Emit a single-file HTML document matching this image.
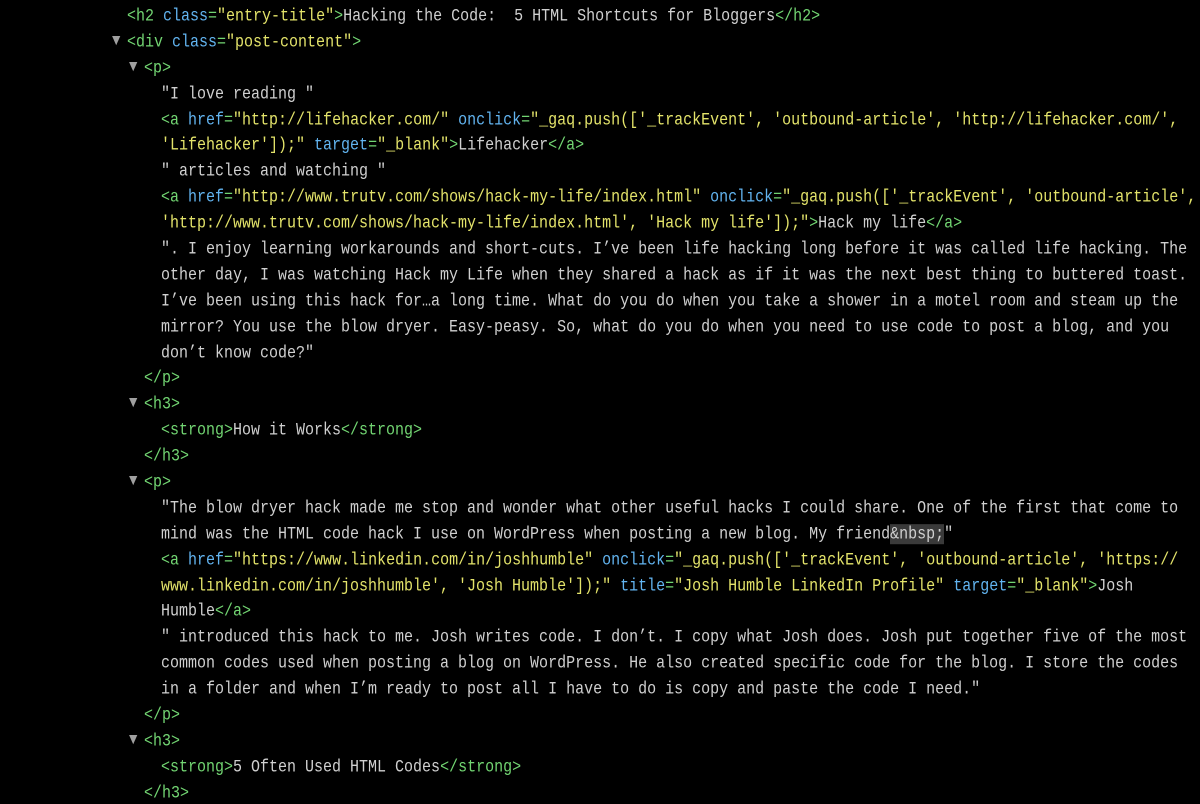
<!DOCTYPE html>
<html><head><meta charset="utf-8"><style>
html,body{margin:0;padding:0;background:#000;width:1200px;height:800px;overflow:hidden}
.c{position:absolute;left:0;top:4px;width:1200px;height:800px;overflow:hidden;font-family:"Liberation Mono",monospace;font-size:15px;color:#d0d0d0}
.l{height:25.9px;line-height:25.9px;position:relative;white-space:pre;transform:scaleY(1.18);transform-origin:50% 55%}
.t{color:#72d572}.n{color:#62b4f0}.v{color:#e3e36a}
.a{position:absolute;color:#a0a0a0;font-size:14px}
.hl{background:#3a3a3a}
</style></head><body><div class="c"><div class="l" style="padding-left:127px"><span class="t">&lt;h2 </span><span class="n">class</span><span class="t">=</span><span class="v">"entry-title"</span><span class="t">&gt;</span>Hacking the Code:  5 HTML Shortcuts for Bloggers<span class="t">&lt;/h2&gt;</span></div><div class="l" style="padding-left:127px"><span class="a" style="left:112px">▼</span><span class="t">&lt;div </span><span class="n">class</span><span class="t">=</span><span class="v">"post-content"</span><span class="t">&gt;</span></div><div class="l" style="padding-left:144px"><span class="a" style="left:129px">▼</span><span class="t">&lt;p&gt;</span></div><div class="l" style="padding-left:161px">"I love reading "</div><div class="l" style="padding-left:161px"><span class="t">&lt;a </span><span class="n">href</span><span class="t">=</span><span class="v">"http://lifehacker.com/"</span> <span class="n">onclick</span><span class="t">=</span><span class="v">"_gaq.push(['_trackEvent', 'outbound-article', 'http://lifehacker.com/',</span></div><div class="l" style="padding-left:161px"><span class="v">'Lifehacker']);"</span> <span class="n">target</span><span class="t">=</span><span class="v">"_blank"</span><span class="t">&gt;</span>Lifehacker<span class="t">&lt;/a&gt;</span></div><div class="l" style="padding-left:161px">" articles and watching "</div><div class="l" style="padding-left:161px"><span class="t">&lt;a </span><span class="n">href</span><span class="t">=</span><span class="v">"http://www.trutv.com/shows/hack-my-life/index.html"</span> <span class="n">onclick</span><span class="t">=</span><span class="v">"_gaq.push(['_trackEvent', 'outbound-article',</span></div><div class="l" style="padding-left:161px"><span class="v">'http://www.trutv.com/shows/hack-my-life/index.html', 'Hack my life']);"</span><span class="t">&gt;</span>Hack my life<span class="t">&lt;/a&gt;</span></div><div class="l" style="padding-left:161px">". I enjoy learning workarounds and short-cuts. I’ve been life hacking long before it was called life hacking. The</div><div class="l" style="padding-left:161px">other day, I was watching Hack my Life when they shared a hack as if it was the next best thing to buttered toast.</div><div class="l" style="padding-left:161px">I’ve been using this hack for…a long time. What do you do when you take a shower in a motel room and steam up the</div><div class="l" style="padding-left:161px">mirror? You use the blow dryer. Easy-peasy. So, what do you do when you need to use code to post a blog, and you</div><div class="l" style="padding-left:161px">don’t know code?"</div><div class="l" style="padding-left:144px"><span class="t">&lt;/p&gt;</span></div><div class="l" style="padding-left:144px"><span class="a" style="left:129px">▼</span><span class="t">&lt;h3&gt;</span></div><div class="l" style="padding-left:161px"><span class="t">&lt;strong&gt;</span>How it Works<span class="t">&lt;/strong&gt;</span></div><div class="l" style="padding-left:144px"><span class="t">&lt;/h3&gt;</span></div><div class="l" style="padding-left:144px"><span class="a" style="left:129px">▼</span><span class="t">&lt;p&gt;</span></div><div class="l" style="padding-left:161px">"The blow dryer hack made me stop and wonder what other useful hacks I could share. One of the first that come to</div><div class="l" style="padding-left:161px">mind was the HTML code hack I use on WordPress when posting a new blog. My friend<span class="hl">&amp;nbsp;</span>"</div><div class="l" style="padding-left:161px"><span class="t">&lt;a </span><span class="n">href</span><span class="t">=</span><span class="v">"https://www.linkedin.com/in/joshhumble"</span> <span class="n">onclick</span><span class="t">=</span><span class="v">"_gaq.push(['_trackEvent', 'outbound-article', 'https://</span></div><div class="l" style="padding-left:161px"><span class="v">www.linkedin.com/in/joshhumble', 'Josh Humble']);"</span> <span class="n">title</span><span class="t">=</span><span class="v">"Josh Humble LinkedIn Profile"</span> <span class="n">target</span><span class="t">=</span><span class="v">"_blank"</span><span class="t">&gt;</span>Josh</div><div class="l" style="padding-left:161px">Humble<span class="t">&lt;/a&gt;</span></div><div class="l" style="padding-left:161px">" introduced this hack to me. Josh writes code. I don’t. I copy what Josh does. Josh put together five of the most</div><div class="l" style="padding-left:161px">common codes used when posting a blog on WordPress. He also created specific code for the blog. I store the codes</div><div class="l" style="padding-left:161px">in a folder and when I’m ready to post all I have to do is copy and paste the code I need."</div><div class="l" style="padding-left:144px"><span class="t">&lt;/p&gt;</span></div><div class="l" style="padding-left:144px"><span class="a" style="left:129px">▼</span><span class="t">&lt;h3&gt;</span></div><div class="l" style="padding-left:161px"><span class="t">&lt;strong&gt;</span>5 Often Used HTML Codes<span class="t">&lt;/strong&gt;</span></div><div class="l" style="padding-left:144px"><span class="t">&lt;/h3&gt;</span></div></div></body></html>
